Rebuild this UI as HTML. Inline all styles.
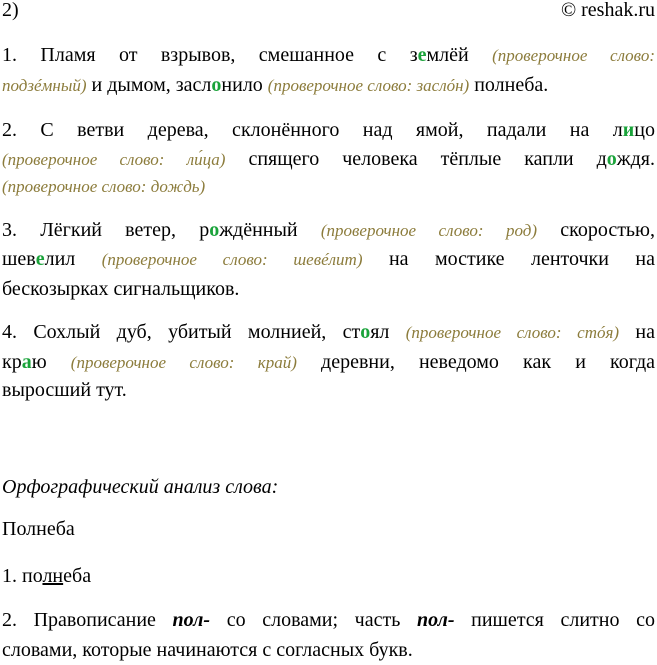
<!DOCTYPE html>
<html><head><meta charset="utf-8"><style>
body{margin:0;width:657px;height:663px;background:#fff;position:relative;overflow:hidden;font-family:"Liberation Serif","Noto Serif CJK SC","DejaVu Serif",serif;font-size:20px;color:#000}
.l{position:absolute;left:2px;width:653px;height:30px;line-height:30px;white-space:nowrap}
.j{text-align:justify;text-align-last:justify}
i.c{color:#8c7c3c;font-size:17px}
b.g{color:#1aa33a;font-weight:bold}
</style></head><body>
<div class="l" style="top:-5px">2)</div>
<div class="l" style="top:-5px;text-align:right">© reshak.ru</div>

<div class="l j" style="top:40px">1. Пламя от взрывов, смешанное с з<b class="g">е</b>млёй <i class="c">(проверочное слово:</i></div>
<div class="l" style="top:70px"><i class="c">подзéмный)</i> и дымом, засл<b class="g">о</b>нило <i class="c">(проверочное слово: заслóн)</i> полнеба.</div>

<div class="l j" style="top:115px">2. С ветви дерева, склонённого над ямой, падали на л<b class="g">и</b>цо</div>
<div class="l j" style="top:144px"><i class="c">(проверочное слово: ли́ца)</i> спящего человека тёплые капли д<b class="g">о</b>ждя.</div>
<div class="l" style="top:171px"><i class="c">(проверочное слово: дождь)</i></div>

<div class="l j" style="top:215px">3. Лёгкий ветер, р<b class="g">о</b>ждённый <i class="c">(проверочное слово: род)</i> скоростью,</div>
<div class="l j" style="top:244px">шев<b class="g">е</b>лил <i class="c">(проверочное слово: шевéлит)</i> на мостике ленточки на</div>
<div class="l" style="top:274px">бескозырках сигнальщиков.</div>

<div class="l j" style="top:317px">4. Сохлый дуб, убитый молнией, ст<b class="g">о</b>ял <i class="c">(проверочное слово: стóя)</i> на</div>
<div class="l j" style="top:347px">кр<b class="g">а</b>ю <i class="c">(проверочное слово: край)</i> деревни, неведомо как и когда</div>
<div class="l" style="top:375px">выросший тут.</div>

<div class="l" style="top:472px"><i>Орфографический анализ слова:</i></div>
<div class="l" style="top:514px">Полнеба</div>
<div class="l" style="top:561px">1. по<u>лн</u>еба</div>
<div class="l j" style="top:605px">2. Правописание <b><i>пол-</i></b> со словами; часть <b><i>пол-</i></b> пишется слитно со</div>
<div class="l" style="top:635px">словами, которые начинаются с согласных букв.</div>
</body></html>
